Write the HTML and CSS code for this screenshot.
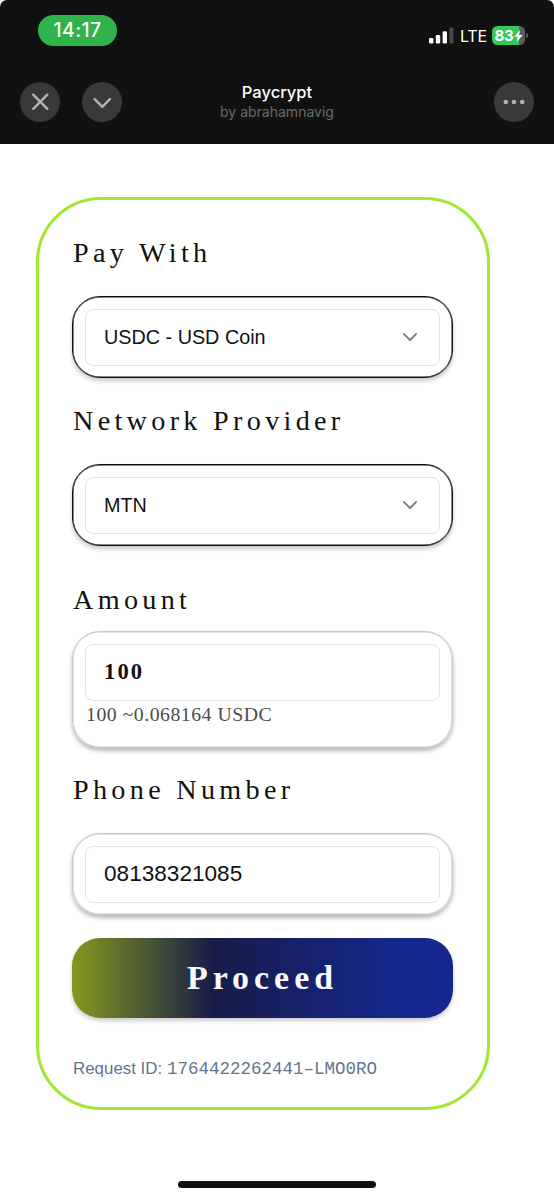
FILE: index.html
```html
<!DOCTYPE html>
<html lang="en">
<head>
    <meta charset="UTF-8">
    <meta name="viewport" content="width=device-width, initial-scale=1.0">
    <title>Paycrypt</title>
    <link rel="stylesheet" href="styles.css">
</head>
<body>
    <header class="topbar">
        <div class="status-row">
            <div class="time">14:17</div>
            <div class="status-icons">
                <svg class="signal" width="25" height="17" viewBox="0 0 25 17">
                    <rect x="0" y="11" width="4.4" height="5.6" rx="1.3" fill="#fff"/>
                    <rect x="6.8" y="8" width="4.4" height="8.6" rx="1.3" fill="#fff"/>
                    <rect x="13.6" y="4.3" width="4.4" height="12.3" rx="1.3" fill="#fff"/>
                    <rect x="20.2" y="0.4" width="4.2" height="16.2" rx="1.3" fill="#474747"/>
                </svg>
                <span class="network">LTE</span>
                <div class="battery">
                    <span>83</span>
                    <svg width="9" height="12" viewBox="0 0 9 12">
                        <path d="M6 0 L0.3 6.8 H3.7 L2.7 12 L8.6 4.9 H5.1 Z" fill="#fff"/>
                    </svg>
                </div>
                <div class="battery-tip"></div>
            </div>
        </div>
        <div class="nav-row">
            <div class="nav-left">
                <button class="round-btn" aria-label="Close">
                    <svg width="40" height="40" viewBox="0 0 40 40">
                        <path d="M13.2 12.7 L27.3 26.8 M27.3 12.7 L13.2 26.8"/>
                    </svg>
                </button>
                <button class="round-btn" aria-label="Minimize">
                    <svg width="40" height="40" viewBox="0 0 40 40">
                        <path d="M12.6 17 L20.3 24.9 L28 17"/>
                    </svg>
                </button>
            </div>
            <div class="app-title">
                <div class="name">Paycrypt</div>
                <div class="author">by abrahamnavig</div>
            </div>
            <button class="round-btn" aria-label="More">
                <svg class="dots" width="40" height="40" viewBox="0 0 40 40">
                    <circle cx="11.8" cy="20" r="2.3"/>
                    <circle cx="20" cy="20" r="2.3"/>
                    <circle cx="28.2" cy="20" r="2.3"/>
                </svg>
            </button>
        </div>
    </header>

    <main class="card">
        <h2 class="label">Pay With</h2>
        <div class="box box-dark">
            <div class="field">
                <span>USDC - USD Coin</span>
                <svg class="chevron" width="16" height="10" viewBox="0 0 16 10">
                    <path d="M1.8 1.8 L8 8 L14.2 1.8"/>
                </svg>
            </div>
        </div>

        <h2 class="label label-network">Network Provider</h2>
        <div class="box box-dark">
            <div class="field">
                <span>MTN</span>
                <svg class="chevron" width="16" height="10" viewBox="0 0 16 10">
                    <path d="M1.8 1.8 L8 8 L14.2 1.8"/>
                </svg>
            </div>
        </div>

        <h2 class="label label-amount">Amount</h2>
        <div class="box box-amount">
            <div class="field field-amount">100</div>
            <p class="converted">100 ~0.068164 USDC</p>
        </div>

        <h2 class="label label-phone">Phone Number</h2>
        <div class="box">
            <div class="field field-phone">08138321085</div>
        </div>

        <button class="proceed">Proceed</button>

        <p class="request">Request ID: <span class="request-id">1764422262441–LMO0RO</span></p>
    </main>

    <div class="home-bar"></div>
</body>
</html>
```
FILE: styles.css
```css
* {
    box-sizing: border-box;
}
body {
    margin: 0;
    height: 1200px;
    background-color: #fff;
    font-family: "Liberation Sans", Arial, sans-serif;
    color: #111;
    overflow: hidden;
}
h2, p {
    margin: 0;
}
button {
    border: none;
    padding: 0;
}

/* Top bar */
.topbar {
    height: 143.5px;
    padding: 15px 20px 0;
    background-color: #111;
    border-radius: 7px 7px 0 0;
    font-family: Inter, sans-serif;
    color: #fff;
}
.status-row {
    display: flex;
    justify-content: space-between;
    height: 66.5px;
    padding: 0 6px 0 18px;
}
.time {
    width: 79px;
    height: 31px;
    border-radius: 16px;
    background-color: #30b34b;
    font-size: 19.5px;
    font-weight: 500;
    line-height: 31px;
    letter-spacing: 0.4px;
    text-align: center;
}
.status-icons {
    display: flex;
    align-items: center;
    height: 41px;
}
.network {
    margin: 1px 6px 0 6px;
    width: 26px;
    font-size: 16px;
    letter-spacing: -0.2px;
    line-height: 20px;
}
.battery {
    display: flex;
    align-items: center;
    width: 33px;
    height: 19px;
    padding-left: 2.5px;
    border-radius: 5.5px;
    background: linear-gradient(to right, #34c759 27px, #5c5c5c 27px);
    font-size: 15px;
    font-weight: 700;
    letter-spacing: -0.2px;
}
.battery-tip {
    width: 2px;
    height: 5px;
    margin-left: 1px;
    border-radius: 0 2px 2px 0;
    background-color: #5c5c5c;
}
.nav-row {
    display: flex;
    justify-content: space-between;
}
.nav-left {
    display: flex;
    gap: 22px;
}
.round-btn {
    width: 40px;
    height: 40px;
    border-radius: 50%;
    background-color: #393939;
}
.round-btn svg {
    display: block;
    fill: none;
    stroke: #b3b3b3;
    stroke-width: 2.4;
    stroke-linecap: round;
    stroke-linejoin: round;
}
.round-btn .dots {
    fill: #b3b3b3;
    stroke: none;
}
.app-title {
    margin-right: 62px;
    text-align: center;
}
.name {
    font-size: 16.5px;
    font-weight: 500;
    line-height: 20px;
}
.author {
    font-size: 14px;
    line-height: 20px;
    color: #6b6b6b;
}

/* Payment card */
.card {
    width: 454px;
    height: 913px;
    margin: 53px 0 0 36px;
    padding: 37px 34px 0;
    border: 3px solid #a3e635;
    border-radius: 65px;
}
.label {
    height: 32px;
    margin-bottom: 27px;
    font-family: "Liberation Serif", "Times New Roman", serif;
    font-size: 28.2px;
    font-weight: 400;
    line-height: 32px;
    letter-spacing: 4.3px;
    white-space: nowrap;
}
.label-network {
    margin-top: 27px;
}
.label-amount {
    margin-top: 38px;
    margin-bottom: 15px;
}
.label-phone {
    margin-top: 26px;
}
.box {
    height: 82px;
    width: 381px;
    margin-left: -1px;
    padding: 12px;
    border: 1px solid #c8c8c8;
    border-radius: 28px;
    box-shadow: inset 0 0 0 0.5px #c8c8c8, 0 3px 4px rgba(0, 0, 0, 0.28);
}
.box-dark {
    border-color: #111;
    box-shadow: inset 0 0 0 0.5px #111, 0 3px 4px rgba(0, 0, 0, 0.22);
}
.box-amount {
    height: 117px;
}
.field {
    display: flex;
    align-items: center;
    justify-content: space-between;
    height: 57px;
    padding: 0 21px 0 18px;
    border: 1px solid #e2e4e9;
    border-radius: 8px;
    font-size: 19.8px;
}
.field-amount {
    font-family: "Liberation Serif", "Times New Roman", serif;
    font-size: 22.6px;
    font-weight: 700;
    letter-spacing: 2.1px;
}
.field-phone {
    font-size: 22.6px;
}
.chevron {
    fill: none;
    stroke: #7a7a7a;
    stroke-width: 1.8;
    stroke-linecap: round;
    stroke-linejoin: round;
}
.converted {
    margin: 1px 0 0 1px;
    font-family: "Liberation Serif", "Times New Roman", serif;
    font-size: 19.8px;
    line-height: 24px;
    letter-spacing: 0.5px;
    color: #4b4b4b;
}
.proceed {
    display: block;
    width: 381px;
    height: 80px;
    margin: 23px 0 0 -1px;
    border-radius: 28px;
    background: linear-gradient(to right, #84991e 0%, #171c48 37%, #15278c 85%, #15278c 100%);
    box-shadow: 0 3px 4px rgba(0, 0, 0, 0.2);
    font-family: "Liberation Serif", "Times New Roman", serif;
    font-size: 33.9px;
    font-weight: 700;
    letter-spacing: 5px;
    line-height: 80px;
    color: #f8fafc;
}
.request {
    margin-top: 40px;
    font-size: 16.9px;
    line-height: 22px;
    color: #64748b;
    white-space: nowrap;
}
.request-id {
    font-family: "Liberation Mono", monospace;
    font-size: 17.5px;
}
.home-bar {
    width: 198px;
    height: 7px;
    margin: 71px 0 0 178px;
    border-radius: 4px;
    background-color: #111;
}
```
